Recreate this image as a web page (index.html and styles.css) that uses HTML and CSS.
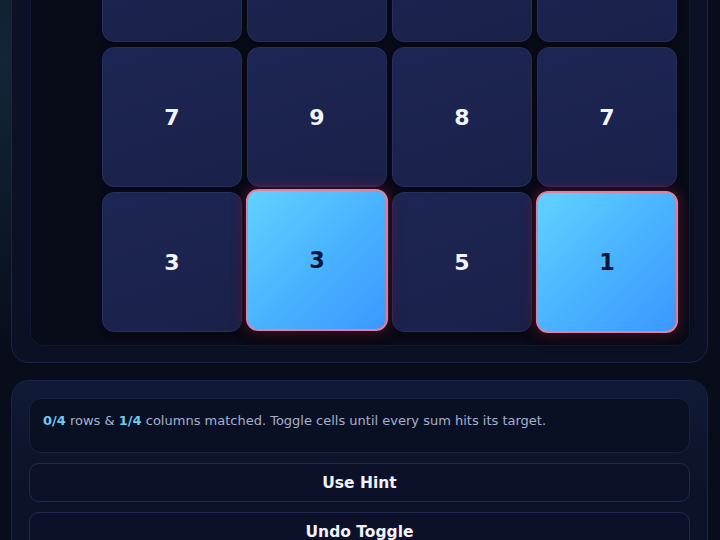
FILE: index.html
```html
<!DOCTYPE html>
<html lang="en">
<head>
<meta charset="utf-8">
<title>Sum Toggle</title>
<link rel="stylesheet" href="styles.css">
</head>
<body>
<div class="page">
  <section class="board-panel">
    <div class="board">
      <div class="grid">
        <div class="cell"></div>
        <div class="cell"></div>
        <div class="cell"></div>
        <div class="cell"></div>
        <div class="cell">7</div>
        <div class="cell">9</div>
        <div class="cell">8</div>
        <div class="cell">7</div>
        <div class="cell">3</div>
        <div class="cell on lift">3</div>
        <div class="cell">5</div>
        <div class="cell on grow">1</div>
      </div>
    </div>
  </section>
  <section class="controls">
    <div class="message"><b>0/4</b> rows &amp; <b>1/4</b> columns matched. Toggle cells until every sum hits its target.</div>
    <button class="btn">Use Hint</button>
    <button class="btn">Undo Toggle</button>
  </section>
</div>
</body>
</html>
```
FILE: styles.css
```css
* { box-sizing: border-box; }
html, body { margin: 0; height: 100%; }
body {
  font-family: "DejaVu Sans", "Noto Sans", sans-serif;
  background:
    radial-gradient(ellipse 260px 420px at 0 60px, rgba(30, 70, 90, 0.45), rgba(30,70,90,0) 70%),
    #080c1b;
  color: #eef2ff;
  overflow: hidden;
}
.page {
  padding: 0 12px 0 11px;
  margin-top: -138px;
  display: flex;
  flex-direction: column;
  gap: 17px;
}
.board-panel {
  border: 1px solid #1c2547;
  border-radius: 18px;
  background: linear-gradient(180deg, #0d1228, #0b1024);
  padding: 18px 17px 16px 18px;
}
.board {
  background: #080b18;
  border: 1px solid #121834;
  border-radius: 14px;
  padding: 20px 12px 13px 71px;
}
.grid {
  display: grid;
  grid-template-columns: repeat(4, 140px);
  grid-auto-rows: 140px;
  gap: 5px;
}
.cell {
  display: flex;
  align-items: center;
  justify-content: center;
  border-radius: 12px;
  background: linear-gradient(160deg, #1d2554, #1a2149);
  border: 1px solid #262f5e;
  font-weight: bold;
  font-size: 22px;
  color: #f2f5ff;
  box-shadow: 0 2px 6px rgba(0,0,0,0.35);
}
.cell.on {
  background: linear-gradient(135deg, #62d2ff 0%, #4ab4ff 50%, #3b98ff 100%);
  border: 2px solid #dc82a2;
  color: #0c1630;
  box-shadow: 0 0 14px rgba(220, 40, 90, 0.35), 0 6px 14px rgba(0,0,0,0.4);
}
.cell.lift { transform: translateY(-2px) scale(1.015); }
.cell.grow { transform: scale(1.015); }
.controls {
  border: 1px solid #1a2448;
  border-radius: 18px;
  background: linear-gradient(180deg, #101a36 0%, #0c1228 60%);
  padding: 17px 17px 18px 17px;
  display: flex;
  flex-direction: column;
  gap: 10px;
}
.message {
  height: 55px;
  padding: 13px 13px 0 13px;
  border: 1px solid #19213f;
  border-radius: 12px;
  background: #0a1024;
  font-size: 13px;
  line-height: 18px;
  color: #a6b0cc;
}
.message b { color: #6fcbf4; }
.btn {
  height: 39px;
  border: 1px solid #212a4c;
  border-radius: 10px;
  background: #0c1129;
  color: #f0f3ff;
  font-family: "DejaVu Sans", sans-serif;
  font-weight: bold;
  font-size: 15.5px;
  padding: 0;
}
.btn + .btn { margin-top: 0; }
```
